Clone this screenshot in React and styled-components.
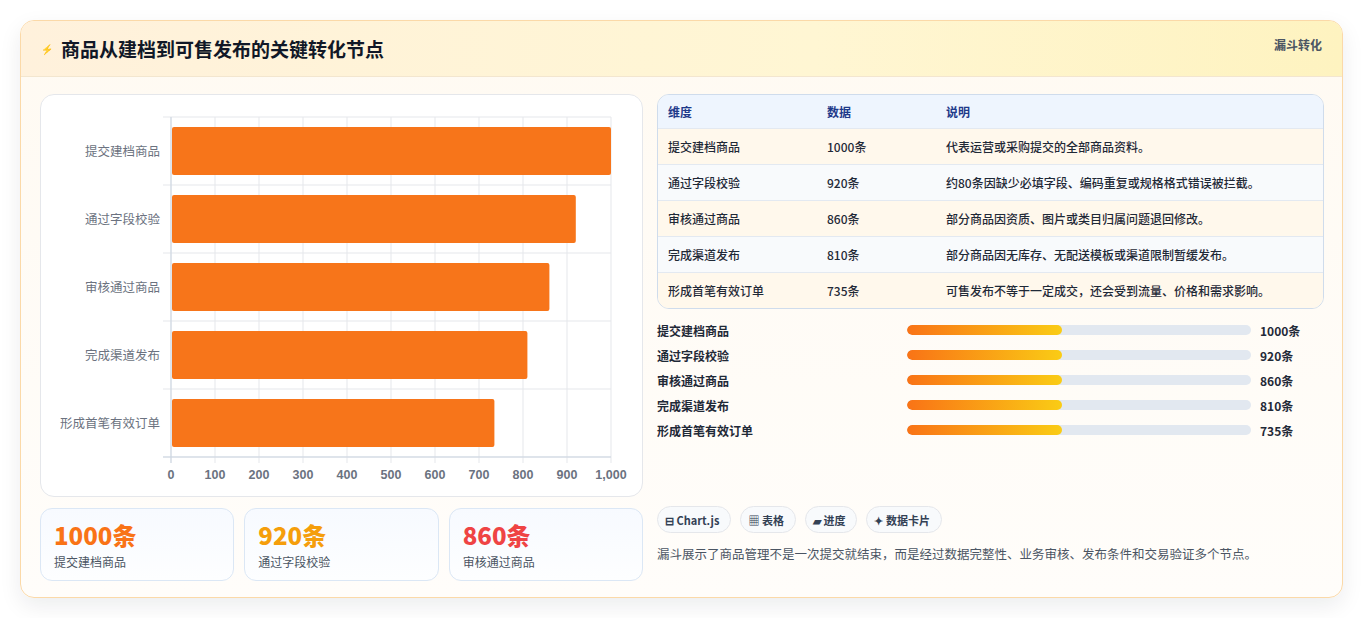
import React from 'react';
import styled, { createGlobalStyle } from 'styled-components';

const GlobalStyle = createGlobalStyle`
  html, body { margin: 0; padding: 0; background: #ffffff; }
  body { font-family: "Noto Sans CJK SC", "Noto Sans", sans-serif; color: #1f2937; }
`;

const Page = styled.div`
  padding: 20px 20px 20px 20px;
`;

const Card = styled.div`
  border: 1px solid #fbd9a8;
  border-radius: 14px;
  background: linear-gradient(180deg, #fffaf2 0%, #fffdfa 100%);
  box-shadow: 0 8px 22px rgba(15, 23, 42, 0.08);
  overflow: hidden;
  height: 578px;
  box-sizing: border-box;
`;

const Header = styled.div`
  height: 55px;
  display: flex;
  justify-content: space-between;
  align-items: flex-start;
  padding: 0 20px 0 20px;
  background: linear-gradient(90deg, #fff1dc 0%, #fff6d3 60%, #fef3c0 100%);
  border-bottom: 1px solid #f3e6cf;
`;

const Title = styled.h1`
  margin: 0;
  padding-top: 14px;
  font-size: 19px;
  font-weight: 700;
  color: #111827;
  display: flex;
  align-items: center;
  gap: 8px;
`;

const Bolt = styled.span`
  color: #4f6ee8;
  font-size: 10px;
`;

const Tag = styled.span`
  padding-top: 15px;
  font-size: 12px;
  font-weight: 700;
  color: #4b5563;
`;

const Body = styled.div`
  display: grid;
  grid-template-columns: 603px 667px;
  gap: 14px;
  padding: 17px 19px 0 19px;
`;

const Left = styled.div`
  display: flex;
  flex-direction: column;
  gap: 11px;
`;

const ChartBox = styled.div`
  height: 403px;
  border: 1px solid #e5e7eb;
  border-radius: 14px;
  background: #ffffff;
  box-sizing: border-box;
`;

const Stats = styled.div`
  display: grid;
  grid-template-columns: repeat(3, 1fr);
  gap: 10px;
`;

const Stat = styled.div`
  height: 73px;
  box-sizing: border-box;
  border: 1px solid #dbe7f5;
  border-radius: 12px;
  background: linear-gradient(180deg, #f7faff 0%, #fdfeff 100%);
  padding: 10px 13px;
`;

const StatValue = styled.div`
  font-size: 24px;
  font-weight: 800;
  line-height: 32px;
  color: ${p => p.$color};
`;

const StatLabel = styled.div`
  font-size: 12px;
  color: #4b5563;
  margin-top: 2px;
`;

const Right = styled.div`
  display: flex;
  flex-direction: column;
`;

const Table = styled.div`
  border: 1px solid #cfdcec;
  border-radius: 12px;
  overflow: hidden;
`;

const Row = styled.div`
  display: grid;
  grid-template-columns: 159px 119px 1fr;
  height: ${p => (p.$head ? '33px' : '35px')};
  align-items: center;
  padding-left: 10px;
  font-size: 12px;
  background: ${p => (p.$head ? '#eef5fe' : p.$odd ? '#fff8ec' : '#f8fafc')};
  color: ${p => (p.$head ? '#1e3a8a' : '#1f2937')};
  font-weight: ${p => (p.$head ? 700 : 500)};
  border-top: ${p => (p.$head ? 'none' : '1px solid #e3e9f1')};
`;

const Bars = styled.div`
  display: flex;
  flex-direction: column;
  gap: 7px;
  margin-top: 12px;
`;

const BarRow = styled.div`
  display: grid;
  grid-template-columns: 250px 344px 1fr;
  align-items: center;
  gap: 0;
  height: 18px;
  font-size: 12px;
  font-weight: 600;
  color: #1f2937;
`;

const Track = styled.div`
  height: 10px;
  border-radius: 5px;
  background: #e2e8f0;
  overflow: hidden;
`;

const Fill = styled.div`
  height: 100%;
  border-radius: 5px;
  background: linear-gradient(90deg, #f97316, #facc15);
`;

const Value = styled.span`
  padding-left: 9px;
  font-weight: 700;
`;

const Chips = styled.div`
  display: flex;
  gap: 9px;
  margin-top: auto;
`;

const Chip = styled.span`
  height: 27px;
  box-sizing: border-box;
  padding: 0 11px 0 7px;
  border: 1px solid #e5e7eb;
  border-radius: 14px;
  background: #f8fafc;
  display: inline-flex;
  align-items: center;
  gap: 3px;
  font-size: 11px;
  font-weight: 600;
  color: #334155;
`;

const Note = styled.p`
  margin: 11px 0 0 0;
  font-size: 12.5px;
  color: #4b5563;
  padding-bottom: 18px;
`;

const data = [
  ['提交建档商品', 1000, '代表运营或采购提交的全部商品资料。'],
  ['通过字段校验', 920, '约80条因缺少必填字段、编码重复或规格格式错误被拦截。'],
  ['审核通过商品', 860, '部分商品因资质、图片或类目归属问题退回修改。'],
  ['完成渠道发布', 810, '部分商品因无库存、无配送模板或渠道限制暂缓发布。'],
  ['形成首笔有效订单', 735, '可售发布不等于一定成交，还会受到流量、价格和需求影响。'],
];

function Chart() {
  const x0 = 130, x1 = 570, y0 = 22, y1 = 362;
  const w = x1 - x0;
  const rowH = (y1 - y0) / 5;
  return (
    <svg width="601" height="401" style={{ display: 'block' }}>
      {Array.from({ length: 11 }).map((_, i) => (
        <line key={i} x1={x0 + (w * i) / 10} x2={x0 + (w * i) / 10} y1={y0} y2={y1 + 6} stroke="#e5e7eb" />
      ))}
      {Array.from({ length: 6 }).map((_, i) => (
        <line key={'h' + i} x1={x0 - 8} x2={x1} y1={y0 + rowH * i} y2={y0 + rowH * i} stroke="#e5e7eb" />
      ))}
      <line x1={x0} x2={x0} y1={y0} y2={y1 + 6} stroke="#cbd5e1" />
      <line x1={x0 - 8} x2={x1} y1={y1} y2={y1} stroke="#cbd5e1" />
      {data.map(([label, v], i) => (
        <g key={label}>
          <rect x={x0 + 1} y={y0 + rowH * i + 10} width={(w * v) / 1000 - 1} height={48} rx="2" fill="#f7751a" />
          <text x={x0 - 11} y={y0 + rowH * i + 39} textAnchor="end" fontSize="12.5" fill="#6b7280">{label}</text>
        </g>
      ))}
      {Array.from({ length: 11 }).map((_, i) => (
        <text key={'t' + i} x={x0 + (w * i) / 10} y={y1 + 22} textAnchor="middle" fontSize="12.5" fontWeight="600" fill="#6b7280" fontFamily="Liberation Sans, sans-serif">
          {i === 10 ? '1,000' : i * 100}
        </text>
      ))}
    </svg>
  );
}

export default function App() {
  return (
    <Page>
      <GlobalStyle />
      <Card>
        <Header>
          <Title><Bolt>⚡</Bolt>商品从建档到可售发布的关键转化节点</Title>
          <Tag>漏斗转化</Tag>
        </Header>
        <Body>
          <Left>
            <ChartBox><Chart /></ChartBox>
            <Stats>
              <Stat><StatValue $color="#f97316">1000条</StatValue><StatLabel>提交建档商品</StatLabel></Stat>
              <Stat><StatValue $color="#f59e0b">920条</StatValue><StatLabel>通过字段校验</StatLabel></Stat>
              <Stat><StatValue $color="#ef4444">860条</StatValue><StatLabel>审核通过商品</StatLabel></Stat>
            </Stats>
          </Left>
          <Right>
            <Table>
              <Row $head><span>维度</span><span>数据</span><span>说明</span></Row>
              {data.map(([l, v, d], i) => (
                <Row key={l} $odd={i % 2 === 0}><span>{l}</span><span>{v}条</span><span>{d}</span></Row>
              ))}
            </Table>
            <Bars>
              {data.map(([l, v]) => (
                <BarRow key={l}>
                  <span>{l}</span>
                  <Track><Fill style={{ width: '45%' }} /></Track>
                  <Value>{v}条</Value>
                </BarRow>
              ))}
            </Bars>
            <Chips>
              <Chip>⊟ Chart.js</Chip>
              <Chip>▦ 表格</Chip>
              <Chip>▰ 进度</Chip>
              <Chip>✦ 数据卡片</Chip>
            </Chips>
            <Note>漏斗展示了商品管理不是一次提交就结束，而是经过数据完整性、业务审核、发布条件和交易验证多个节点。</Note>
          </Right>
        </Body>
      </Card>
    </Page>
  );
}
